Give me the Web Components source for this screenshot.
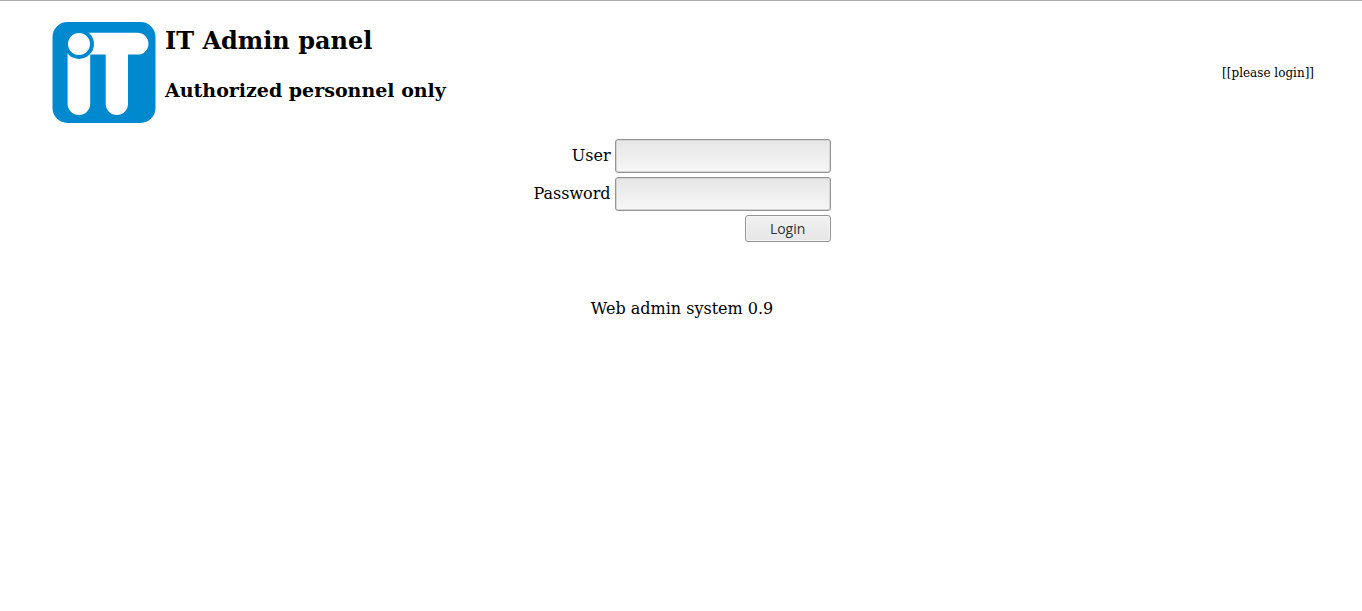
<!DOCTYPE html>
<html lang="en">
<head>
<meta charset="utf-8">
<title>IT Admin panel</title>
<style>
body { margin: 0; background: #fff; color: #000; font: 16px/20px "DejaVu Serif", serif; }
</style>
</head>
<body>
<admin-page></admin-page>
<script>
class ShadowElement extends HTMLElement {
  constructor() {
    super();
    const template = document.createElement('template');
    template.innerHTML = this.constructor.markup;
    this.attachShadow({ mode: 'open' }).append(template.content.cloneNode(true));
  }
}

customElements.define('it-logo', class extends ShadowElement {
  static markup = `
    <style>:host { display: block; flex: none; } svg { display: block; }</style>
    <svg width="104" height="102" viewBox="0 0 104 102" role="img" aria-label="iT">
      <rect x=".5" width="103" height="101" rx="15" fill="#0089cf"/>
      <g fill="#fff">
        <path d="M26 10.7H85.5A10.95 10.95 0 0 1 85.5 32.6H76V81.8A11.15 11.15 0 0 1 53.7 81.8V32.6H26Z"/>
        <path d="M15.6 31H38.2V81.8A11.3 11.3 0 0 1 15.6 81.8Z"/>
      </g>
      <circle cx="27" cy="22" r="13" fill="#fff" stroke="#0089cf" stroke-width="4"/>
    </svg>`;
});

customElements.define('admin-header', class extends ShadowElement {
  static markup = `
    <style>
      :host { display: block; }
      header { display: flex; align-items: center; gap: 9px; padding: 22px 48px 0 52px; }
      .titles { flex: 1; }
      h2, h3 { margin: 0; }
      h2 { font-size: 24px; line-height: 28px; margin-bottom: 24px; }
      h3 { font-size: 19px; line-height: 22px; margin-bottom: 18px; }
      .status { font-size: 12px; }
    </style>
    <header>
      <it-logo></it-logo>
      <div class="titles">
        <h2><slot name="title"></slot></h2>
        <h3><slot name="subtitle"></slot></h3>
      </div>
      <div class="status"><slot name="status"></slot></div>
    </header>`;
});

customElements.define('login-form', class extends ShadowElement {
  static markup = `
    <style>
      :host { display: block; }
      form { display: grid; grid-template-columns: auto 216px; gap: 4px; justify-content: center; align-items: center; }
      label { text-align: right; }
      input, button { box-sizing: border-box; border: 1px solid #949494; border-radius: 3px; margin: 0; }
      input { width: 100%; height: 34px; padding: 4px 8px; font: inherit;
        background: linear-gradient(#e6e6e6, #f6f6f6); box-shadow: inset 0 0 0 1px #d4d4d4; }
      button { grid-column: 2; justify-self: end; width: 86px; height: 27px; padding: 0;
        font: 14px/20px "Open Sans", sans-serif; color: #333;
        background: linear-gradient(#f1f1f1, #e6e6e6); box-shadow: inset 0 0 0 1px #f4f4f4; }
    </style>
    <form>
      <label for="user">User</label><input id="user" type="text">
      <label for="password">Password</label><input id="password" type="password">
      <button type="submit">Login</button>
    </form>`;
});

customElements.define('admin-page', class extends ShadowElement {
  static markup = `
    <style>
      :host { display: block; border-top: 1px solid #aaa; }
      admin-header { margin-top: -1px; }
      main { padding: 15px 0 0 2px; }
      footer { padding: 57px 0 24px 2px; text-align: center; }
    </style>
    <admin-header>
      <span slot="title">IT Admin panel</span>
      <span slot="subtitle">Authorized personnel only</span>
      <span slot="status">[[please login]]</span>
    </admin-header>
    <main><login-form></login-form></main>
    <footer>Web admin system 0.9</footer>`;
});
</script>
</body>
</html>
